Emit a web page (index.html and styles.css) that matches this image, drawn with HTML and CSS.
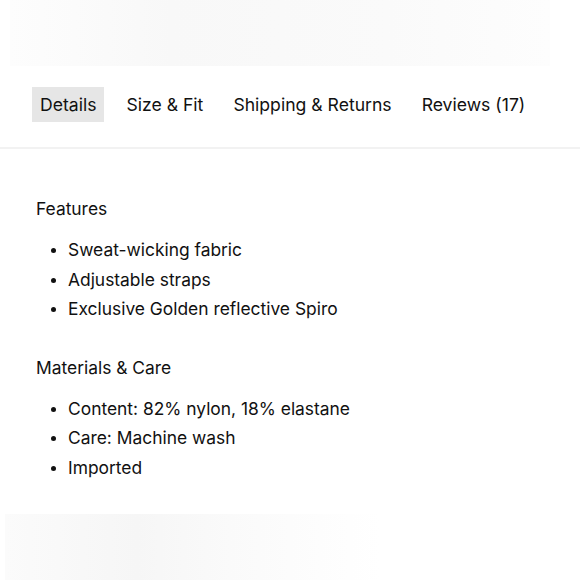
FILE: index.html
```html
<!DOCTYPE html>
<html lang="en">
<head>
    <meta charset="UTF-8">
    <meta name="viewport" content="width=device-width, initial-scale=1.0">
    <title>Product Details</title>
    <link rel="stylesheet" href="styles.css">
</head>
<body>

<div class="ghost ghost-top"></div>

<div class="tabs">
    <span class="tab active">Details</span>
    <span class="tab">Size &amp; Fit</span>
    <span class="tab">Shipping &amp; Returns</span>
    <span class="tab">Reviews (17)</span>
</div>

<div class="panel">
    <h3>Features</h3>
    <ul>
        <li>Sweat-wicking fabric</li>
        <li>Adjustable straps</li>
        <li>Exclusive Golden reflective Spiro</li>
    </ul>

    <h3>Materials &amp; Care</h3>
    <ul>
        <li>Content: 82% nylon, 18% elastane</li>
        <li>Care: Machine wash</li>
        <li>Imported</li>
    </ul>
</div>

<div class="ghost ghost-bottom"></div>

</body>
</html>
```

FILE: styles.css
```css
body {
    font-family: Inter, "Noto Sans", sans-serif;
    margin: 0;
    padding: 0;
    background: #fff;
    color: #111;
    width: 580px;
    height: 580px;
    overflow: hidden;
}
.ghost {
    height: 66px;
    background: linear-gradient(90deg, #fdfdfd 0%, #f8f8f8 30%, #fafafa 70%, #fdfdfd 100%);
}
.ghost-top {
    margin: 0 30px 0 10px;
}
.ghost-bottom {
    margin: 31px 200px 0 5px;
    background: linear-gradient(90deg, #fbfbfb 0%, #f6f6f6 35%, #fafafa 60%, #ffffff 100%);
}
.tabs {
    display: flex;
    gap: 14px;
    padding: 21px 32px 25px;
    border-bottom: 2px solid #f2f2f2;
}
.tab {
    font-size: 17.6px;
    line-height: 35px;
    padding: 0 8px;
    cursor: pointer;
}
.tab.active {
    background: #e6e6e6;
}
.panel {
    padding: 48px 36px 0;
}
h3 {
    font-size: 17.4px;
    font-weight: 400;
    margin: 0 0 14px;
    line-height: 24px;
}
ul {
    margin: 0 0 32px;
    padding-left: 32px;
}
li {
    font-size: 17.4px;
    line-height: 29.5px;
}
li::marker {
    font-size: 15px;
}
```
